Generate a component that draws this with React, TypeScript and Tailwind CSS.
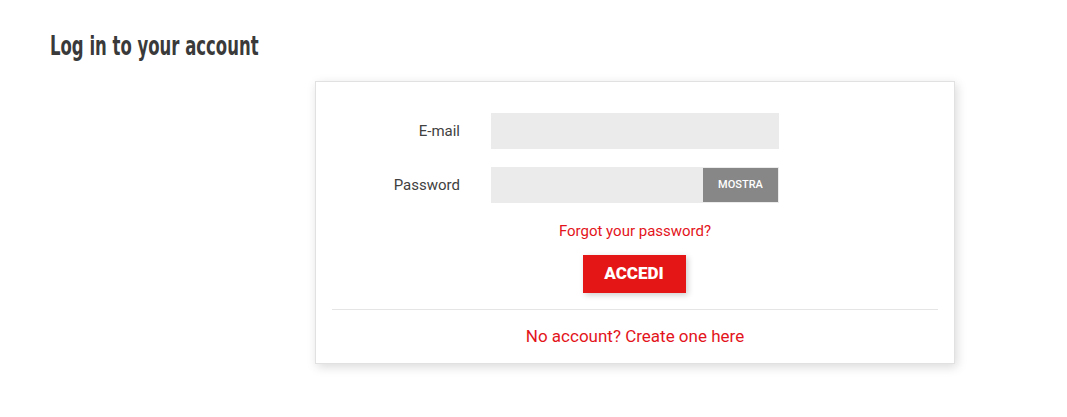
export default function App() {
  return (
    <div className="min-h-screen bg-white px-[50px] pt-[31px] font-['Roboto','Liberation_Sans',sans-serif] text-[#414141]">
      {/* Page title */}
      <h1 className="h-[30px] whitespace-nowrap">
        <span className="inline-block origin-left scale-x-[0.705] text-[26px] leading-[30px] font-bold text-[#3a3a3a] font-['DejaVu_Sans',sans-serif] font-stretch-condensed">
          Log in to your account
        </span>
      </h1>

      {/* Login card */}
      <div className="ml-[265px] mt-[20px] w-[640px] border border-[#e1e1e1] bg-white px-4 pt-[31px] pb-[15px] shadow-[2px_3px_10px_0_rgba(0,0,0,0.15)]">
        <form className="flex flex-col">
          <div className="flex items-center">
            <label className="w-[128px] text-right text-[15px]">E-mail</label>
            <input
              type="email"
              className="ml-[31px] h-[36px] w-[288px] bg-[#ebebeb] px-3 outline-none"
            />
          </div>

          <div className="mt-[18px] flex items-center">
            <label className="w-[128px] text-right text-[15px]">Password</label>
            <div className="ml-[31px] flex h-[36px] w-[288px] bg-[#ebebeb]">
              <input type="password" className="h-full min-w-0 flex-1 bg-transparent px-3 outline-none" />
              <button
                type="button"
                className="my-[1px] mr-[1px] w-[75px] shrink-0 bg-[#878787] text-[11px] font-medium text-white"
              >
                MOSTRA
              </button>
            </div>
          </div>

          <div className="mt-[17px] flex justify-center">
            <a href="#" className="text-[15px] leading-[22px] text-[#e3141b]">
              Forgot your password?
            </a>
          </div>

          <div className="mt-[13px] flex justify-center">
            <button
              type="button"
              className="h-[38px] w-[103px] -translate-x-px bg-[#e51616] text-[17px] font-black text-white shadow-[2px_2px_6px_0_rgba(0,0,0,0.2)]"
            >
              ACCEDI
            </button>
          </div>
        </form>

        <hr className="mt-[16px] border-t border-[#e5e5e5]" />

        <div className="mt-[14px] flex justify-center">
          <a href="#" className="text-[17px] leading-[24px] text-[#e3141b]">
            No account? Create one here
          </a>
        </div>
      </div>
    </div>
  );
}
